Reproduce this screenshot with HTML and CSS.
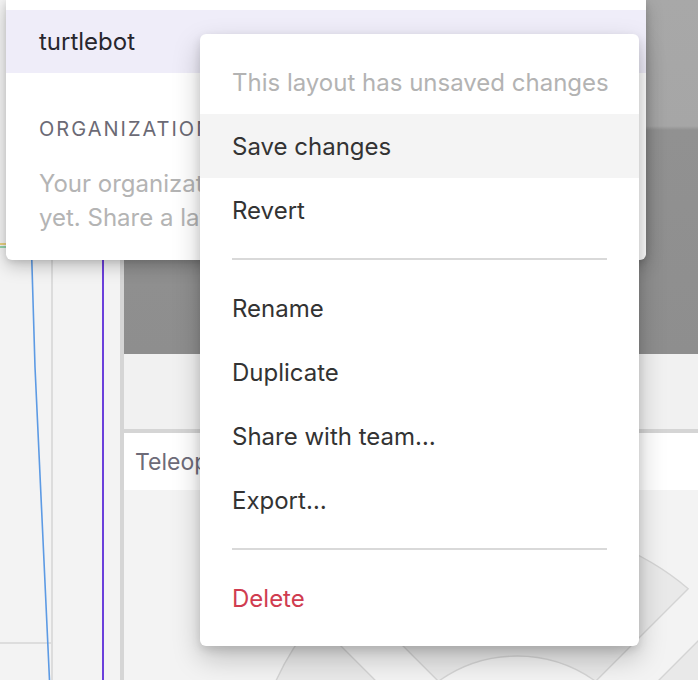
FILE: index.html
```html
<!DOCTYPE html>
<html lang="en">
<head>
<meta charset="utf-8">
<title>Layouts</title>
<link rel="stylesheet" href="styles.css">
</head>
<body>
<div class="workspace">
  <div class="plot-panel">
    <svg class="plot-svg" width="120" height="680" viewBox="0 0 120 680">
      <line x1="52" y1="0" x2="52" y2="680" stroke="#d6d6d6" stroke-width="1.6"/>
      <line x1="0" y1="643" x2="51" y2="643" stroke="#d6d6d6" stroke-width="1.6"/>
      <line x1="0" y1="244" x2="10" y2="244" stroke="#e6c65c" stroke-width="1.5"/>
      <line x1="0" y1="247" x2="10" y2="247" stroke="#74c894" stroke-width="1.5"/>
      <polyline points="31.5,250 35,367 49.5,680" fill="none" stroke="#5c9ae4" stroke-width="1.6"/>
      <line x1="103" y1="0" x2="103" y2="680" stroke="#6b3fdb" stroke-width="2"/>
    </svg>
  </div>
  <div class="vsplit"></div>
  <div class="right-col">
    <div class="image-panel">
      <div class="image-view"></div>
      <div class="image-rest"></div>
    </div>
    <div class="hsplit"></div>
    <div class="teleop-panel">
      <div class="panel-toolbar"><span class="panel-title">Teleop</span></div>
      <div class="teleop-body">
        <svg class="dpad" width="574" height="190" viewBox="0 0 574 190">
          <g fill="#e9e9e9" stroke="#d4d4d4" stroke-width="1.4">
            <path d="M 314.4 191.3 L 221.8 98.7 A 265 265 0 0 1 564.2 98.7 L 471.6 191.3 A 135 135 0 0 0 314.4 191.3 Z"/>
            <path d="M 283.3 222.4 L 190.7 129.8 A 265 265 0 0 0 190.7 472.2 L 283.3 379.6 A 135 135 0 0 1 283.3 222.4 Z"/>
            <path d="M 502.7 222.4 L 595.3 129.8 A 265 265 0 0 1 595.3 472.2 L 502.7 379.6 A 135 135 0 0 0 502.7 222.4 Z"/>
          </g>
        </svg>
      </div>
    </div>
  </div>
</div>

<div class="layouts-popup">
  <div class="list-top"></div>
  <div class="layout-row selected">turtlebot</div>
  <div class="section-title">ORGANIZATION</div>
  <p class="empty-text">Your organization doesn’t have any shared layouts<br>yet. Share a layout to collaborate with others.</p>
</div>

<div class="menu">
  <div class="menu-item disabled">This layout has unsaved changes</div>
  <div class="menu-item hover">Save changes</div>
  <div class="menu-item">Revert</div>
  <div class="menu-divider"></div>
  <div class="menu-item">Rename</div>
  <div class="menu-item">Duplicate</div>
  <div class="menu-item">Share with team…</div>
  <div class="menu-item">Export…</div>
  <div class="menu-divider"></div>
  <div class="menu-item danger">Delete</div>
</div>
</body>
</html>
```

FILE: styles.css
```css
* { box-sizing: border-box; }

html, body {
  margin: 0;
  padding: 0;
}

body {
  width: 698px;
  height: 680px;
  overflow: hidden;
  position: relative;
  background: #f3f3f3;
  font-family: Inter, "Noto Sans", "Liberation Sans", sans-serif;
}

.workspace {
  display: flex;
  height: 680px;
}

.plot-panel {
  width: 120px;
  flex: none;
  background: #f3f3f3;
}

.plot-svg { display: block; }

.vsplit {
  width: 4px;
  flex: none;
  background: #d5d5d5;
}

.right-col {
  flex: 1;
  display: flex;
  flex-direction: column;
  min-width: 0;
}

.image-panel {
  height: 429px;
  display: flex;
  flex-direction: column;
  flex: none;
}

.image-view {
  height: 354px;
  background: linear-gradient(to bottom, #a8a8a8 0, #a6a6a6 126px, #919191 130px, #8e8e8e 354px);
}

.image-rest {
  flex: 1;
  background: #f1f1f1;
}

.hsplit {
  height: 4px;
  flex: none;
  background: #d5d5d5;
}

.teleop-panel {
  flex: 1;
  display: flex;
  flex-direction: column;
}

.panel-toolbar {
  height: 57px;
  flex: none;
  background: #ffffff;
  display: flex;
  align-items: center;
  padding-left: 11px;
}

.panel-title {
  font-size: 23px;
  color: #6d6b78;
}

.teleop-body {
  flex: 1;
  background: #f3f3f3;
  overflow: hidden;
}

.dpad { display: block; }

/* Layouts sidebar popover */
.layouts-popup {
  position: absolute;
  left: 6px;
  top: 0;
  width: 640px;
  height: 260px;
  background: #ffffff;
  border-radius: 0 0 6px 6px;
  box-shadow: 0 6px 18px rgba(0, 0, 0, 0.22), 0 2px 6px rgba(0, 0, 0, 0.1);
  overflow: hidden;
}

.list-top { height: 10px; }

.layout-row {
  height: 63px;
  display: flex;
  align-items: center;
  padding-left: 33px;
  font-size: 24px;
  color: #27262e;
}

.layout-row.selected { background: #efedf9; }

.section-title {
  margin-top: 44px;
  padding-left: 33px;
  font-size: 20px;
  letter-spacing: 2px;
  color: #6b6a75;
  line-height: 24px;
}

.empty-text {
  margin: 26px 0 0;
  padding-left: 33px;
  font-size: 24px;
  line-height: 34px;
  color: #b4b4b4;
  white-space: nowrap;
}

/* Context menu */
.menu {
  position: absolute;
  left: 200px;
  top: 34px;
  width: 439px;
  padding: 16px 0;
  background: #ffffff;
  border-radius: 6px;
  box-shadow: 0 12px 28px rgba(0, 0, 0, 0.22), 0 4px 10px rgba(0, 0, 0, 0.12);
}

.menu-item {
  height: 64px;
  display: flex;
  align-items: center;
  padding: 0 32px;
  font-size: 24px;
  color: #333333;
  white-space: nowrap;
}

.menu-item.disabled { color: #b3b3b3; }
.menu-item.hover { background: #f4f4f4; }
.menu-item.danger { color: #d03c50; }

.menu-divider {
  height: 2px;
  margin: 16px 32px;
  background: #d9d9d9;
}
```
